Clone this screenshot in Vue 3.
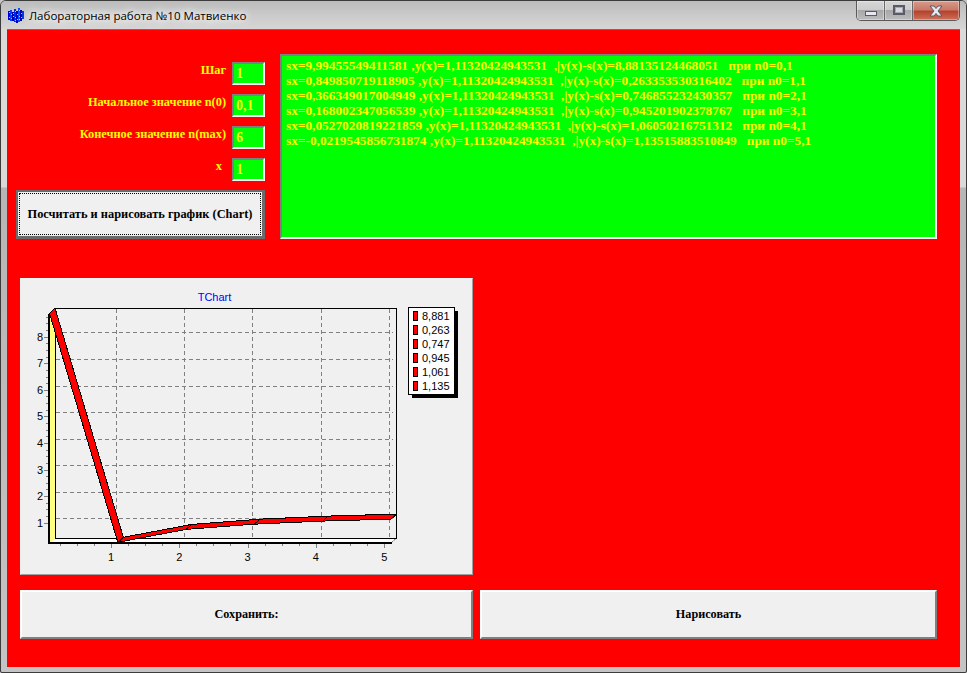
<script setup>
// --- Données du formulaire ---
const fields = [
  { label: 'Шаг', value: '1' },
  { label: 'Начальное значение n(0)', value: '0,1' },
  { label: 'Конечное значение n(max)', value: '6' },
  { label: 'x', value: '1', shift: true },
]

const lines = [
  'sx=9,99455549411581 ,y(x)=1,11320424943531  ,|y(x)-s(x)=8,88135124468051   при n0=0,1',
  'sx=0,849850719118905 ,y(x)=1,11320424943531  ,|y(x)-s(x)=0,263353530316402   при n0=1,1',
  'sx=0,366349017004949 ,y(x)=1,11320424943531  ,|y(x)-s(x)=0,746855232430357   при n0=2,1',
  'sx=0,168002347056539 ,y(x)=1,11320424943531  ,|y(x)-s(x)=0,945201902378767   при n0=3,1',
  'sx=0,0527020819221859 ,y(x)=1,11320424943531  ,|y(x)-s(x)=1,06050216751312   при n0=4,1',
  'sx=-0,0219545856731874 ,y(x)=1,11320424943531  ,|y(x)-s(x)=1,13515883510849   при n0=5,1',
]

// --- Graphique ---
const values = [8.881, 0.263, 0.747, 0.945, 1.061, 1.135]
const legend = ['8,881', '0,263', '0,747', '0,945', '1,061', '1,135']
const depthX = 5.5
const depthY = 5

const px = (n) => 42.7 + n * 68.3
const py = (v) => 522.7 - (v - 1) * 26.57
const points = values.map((v, i) => ({ x: px(i + 0.1), y: py(v) }))

const segments = points.slice(1).map((p, i) => {
  const a = points[i]
  return `${a.x},${a.y} ${p.x},${p.y} ${p.x + depthX},${p.y - depthY} ${a.x + depthX},${a.y - depthY}`
})

const gridX = [116.5, 184.5, 252.5, 321.5, 389.5]
const gridY = [332.5, 359.5, 386.5, 412.5, 439.5, 465.5, 492.5, 518.5]
const yLabels = [8, 7, 6, 5, 4, 3, 2, 1]
const xLabels = [1, 2, 3, 4, 5]

const minorX = []
for (let i = 0; i < 5; i++) {
  for (let k = 1; k < 4; k++) minorX.push(Math.round(px(i)) + k * 17)
}
const minorY = []
for (let v = 1.25; v < 8.9; v += 0.25) minorY.push(Math.round(py(v)) + 0.5)

// Icône de l'application : colonnes de pixels bleus
const iconCols = [
  { x: 0, y: 3, h: 9, c: '#0000d8' },
  { x: 2, y: 2, h: 11, c: '#0a3cff' },
  { x: 4, y: 4, h: 9, c: '#00009c' },
  { x: 6, y: 1, h: 13, c: '#0028f0' },
  { x: 8, y: 3, h: 12, c: '#0000c0' },
  { x: 10, y: 0, h: 14, c: '#0a50ff' },
  { x: 12, y: 2, h: 11, c: '#0000a8' },
  { x: 14, y: 3, h: 8, c: '#0030e8' },
]
</script>

<template>
  <div class="window">
    <header class="titlebar">
      <svg class="app-icon" width="16" height="16" viewBox="0 0 16 16" shape-rendering="crispEdges">
        <rect v-for="c in iconCols" :key="c.x" :x="c.x" :y="c.y" width="2" :height="c.h" :fill="c.c" />
        <path d="M1 4h1v1H1zM3 6h1v1H3zM5 5h1v1H5zM7 3h1v1H7zM9 6h1v1H9zM11 2h1v1h-1zM13 5h1v1h-1zM1 9h1v1H1zM3 10h1v1H3zM5 8h1v1H5zM7 9h1v1H7zM9 11h1v1H9zM11 8h1v1h-1zM13 9h1v1h-1zM7 12h1v1H7zM11 11h1v1h-1z" fill="#8fd0ff" />
      </svg>
      <span class="title">Лабораторная работа №10 Матвиенко</span>
      <div class="controls">
        <div class="ctl">
          <span class="min-glyph"></span>
        </div>
        <div class="ctl">
          <span class="max-glyph"></span>
        </div>
        <div class="ctl close">
          <svg width="20" height="12" viewBox="0 0 20 12">
            <path d="M4 1h4l2 2.500L12 1h4l-4 5 4 5h-4l-2-2.500L8 11H4l4-5z" fill="#e8e8f0" stroke="#5a5a64" stroke-width="1" />
          </svg>
        </div>
      </div>
    </header>

    <main class="client">
      <section class="top">
        <div class="form">
          <div v-for="f in fields" :key="f.label" class="row">
            <label :class="{ shifted: f.shift }">{{ f.label }}</label>
            <div class="field">{{ f.value }}</div>
          </div>
          <button class="btn btn-focus" type="button">
            <span class="focus-rect">Посчитать и нарисовать график (Chart)</span>
          </button>
        </div>
        <div class="memo">
          <div v-for="l in lines" :key="l" class="memo-line">{{ l }}</div>
        </div>
      </section>

      <section class="chart">
        <svg width="451" height="295" viewBox="21 279 451 295">
          <text class="chart-title" x="214.500" y="301" text-anchor="middle">TChart</text>

          <!-- mur gauche, sol -->
          <polygon points="49.500,314 55.500,308.500 55.500,538.500 49.500,543" fill="#ffff80" />
          <polygon points="49.500,543 55.500,538.500 396.500,538.500 391,543" fill="#fff" />

          <g shape-rendering="crispEdges">
            <g stroke="#808080" stroke-dasharray="4 3" fill="none">
              <line v-for="x in gridX" :key="x" :x1="x" y1="309" :x2="x" y2="538" />
              <line v-for="y in gridY" :key="y" x1="56" :y1="y" x2="393" :y2="y" />
            </g>
            <g stroke="#000" fill="none">
              <path d="M55.500 308.500H396.500V538.500H55.500Z" />
              <line x1="49" y1="314" x2="49" y2="544" stroke-width="2" />
              <line x1="48" y1="543" x2="392" y2="543" stroke-width="2" />
            </g>
            <g stroke="#808080">
              <line v-for="x in minorX" :key="'mx' + x" :x1="x + 0.5" y1="544" :x2="x + 0.5" y2="546" />
              <line v-for="y in minorY" :key="'my' + y" x1="46" :y1="y" x2="48" :y2="y" />
              <line v-for="n in xLabels" :key="'tx' + n" :x1="Math.round(px(n)) + 0.5" y1="544" :x2="Math.round(px(n)) + 0.5" y2="548" />
              <line v-for="n in yLabels" :key="'ty' + n" x1="44" :y1="Math.round(py(n)) + 0.5" x2="48" :y2="Math.round(py(n)) + 0.5" />
            </g>
          </g>
          <line x1="391" y1="543" x2="396.500" y2="538" stroke="#000" stroke-dasharray="1 1" />
          <line x1="50" y1="314" x2="55.500" y2="308.500" stroke="#000" />

          <!-- ruban de la série -->
          <g shape-rendering="crispEdges">
            <polygon v-for="s in segments" :key="s" :points="s" fill="#ff0000" stroke="#000" stroke-width="1" />
          </g>

          <text v-for="n in yLabels" :key="'ly' + n" class="axis" x="43" :y="py(n) + 4" text-anchor="end">{{ n }}</text>
          <text v-for="n in xLabels" :key="'lx' + n" class="axis" :x="px(n)" y="561" text-anchor="middle">{{ n }}</text>

          <!-- légende -->
          <g shape-rendering="crispEdges">
            <rect x="412" y="311" width="46" height="87" fill="#000" />
            <rect x="408.500" y="307.500" width="46" height="87" fill="#fff" stroke="#000" />
            <rect v-for="(t, i) in legend" :key="'sw' + t" x="413.500" :y="311.500 + i * 14" width="4" height="9" fill="#f00" stroke="#000" />
          </g>
          <text v-for="(t, i) in legend" :key="'lg' + t" class="axis" x="422" :y="320 + i * 14">{{ t }}</text>
        </svg>
      </section>

      <section class="bottom">
        <button class="btn btn-save" type="button">Сохранить:</button>
        <button class="btn btn-draw" type="button">Нарисовать</button>
      </section>
    </main>
  </div>
</template>

<style scoped>
* {
  box-sizing: border-box;
}

.window {
  width: 967px;
  height: 673px;
  padding: 0 6px 5px;
  border: 1px solid #3c3c3c;
  border-radius: 6px 6px 2px 2px;
  background: linear-gradient(180deg, #dadada 0, #dadada 186px, #b6b6b6 187px, #c4c4c4 100%);
  overflow: hidden;
}

/* BARRE DE TITRE */
.titlebar {
  display: flex;
  align-items: flex-start;
  height: 28px;
  margin: 0 -6px;
  padding-left: 7px;
  background: linear-gradient(180deg, #bcbcbc 0, #cacaca 50%, #d6d6d6 100%);
}

.app-icon {
  margin-top: 7px;
}

.title {
  margin: 6px 0 0 5px;
  font-family: 'Open Sans', sans-serif;
  font-size: 11.55px;
  line-height: 17px;
  color: #000;
  text-shadow: 0 0 6px #fff, 0 0 10px #fff, 0 0 12px #fff;
}

.controls {
  display: flex;
  margin-left: auto;
  margin-right: 6px;
  height: 20px;
  border: 1px solid #5a5a5a;
  border-top: 0;
  border-radius: 0 0 5px 5px;
  overflow: hidden;
}

.ctl {
  display: flex;
  align-items: center;
  justify-content: center;
  width: 28px;
  background: linear-gradient(180deg, #d6d6d6 0, #cccccc 45%, #a8a8a8 50%, #bcbcbc 100%);
  border-right: 1px solid #6a6a6a;
  box-shadow: inset 0 0 0 1px rgba(255, 255, 255, 0.35);
}

.ctl.close {
  width: 46px;
  border-right: 0;
  background: linear-gradient(180deg, #d89a8a 0, #c97a68 45%, #b5432e 55%, #cf7058 100%);
}

.min-glyph {
  width: 12px;
  height: 5px;
  margin-top: 6px;
  background: #e8e8f0;
  border: 1px solid #5a5a64;
}

.max-glyph {
  width: 12px;
  height: 10px;
  margin-top: -2px;
  border: 2px solid #5a5a64;
  background: #d8d8e0;
  box-shadow: inset 0 0 0 1px #a8a8b2;
}

/* ZONE CLIENTE */
.client {
  height: 638px;
  padding-top: 24px;
  background: #ff0000;
  border-top: 1px solid #6e6e6e;
  font-family: 'Liberation Serif', serif;
  font-weight: 700;
}

.top {
  display: flex;
  gap: 15px;
  margin-left: 9px;
}

.form {
  display: flex;
  flex-direction: column;
  gap: 9px;
  width: 249px;
  padding-top: 8px;
}

.row {
  display: flex;
  justify-content: flex-end;
  gap: 6px;
  height: 23px;
}

.row label {
  font-size: 12.35px;
  line-height: 16px;
  color: #ffff00;
}

.row label.shifted {
  margin-right: 4px;
}

.field {
  width: 33px;
  height: 23px;
  padding-left: 2px;
  border: 2px solid;
  border-color: #808080 #fff #fff #808080;
  background: #00ff00;
  color: #ffff00;
  font-size: 14px;
  line-height: 19px;
}

.btn {
  display: block;
  height: 49px;
  padding: 0;
  border: 2px solid;
  border-color: #fff #808080 #808080 #fff;
  background: #f0f0f0;
  color: #000;
  font-family: inherit;
  font-weight: 700;
  font-size: 12.2px;
}

.btn-focus {
  width: 249px;
  border: 2px solid #6c6c6c;
  border-right-width: 3px;
  border-bottom-width: 3px;
  padding: 1px;
  font-size: 12.4px;
}

.focus-rect {
  display: flex;
  align-items: center;
  justify-content: center;
  height: 100%;
  border: 1px dotted #000;
}

.memo {
  width: 657px;
  height: 185px;
  padding: 2px 4px;
  border: 2px solid;
  border-color: #808080 #fff #fff #808080;
  background: #00ff00;
  color: #ffff00;
  font-size: 13.33px;
  line-height: 15px;
  white-space: pre;
}

/* GRAPHIQUE */
.chart {
  width: 453px;
  height: 297px;
  margin: 39px 0 0 13px;
  border: 1px solid;
  border-color: #f4f4f4 #a0a0a0 #a0a0a0 #f4f4f4;
  background: #f0f0f0;
}

.chart svg {
  display: block;
}

.chart-title {
  font-family: 'Liberation Sans', sans-serif;
  font-weight: 400;
  font-size: 11px;
  fill: #0000ff;
}

.axis {
  font-family: 'Liberation Sans', sans-serif;
  font-weight: 400;
  font-size: 11px;
  fill: #000;
}

.bottom {
  display: flex;
  gap: 7px;
  margin: 15px 0 0 13px;
}

.btn-save {
  width: 453px;
}

.btn-draw {
  width: 457px;
}
</style>

<style>
html, body {
  margin: 0;
  background: #c4c4c4;
}
</style>
